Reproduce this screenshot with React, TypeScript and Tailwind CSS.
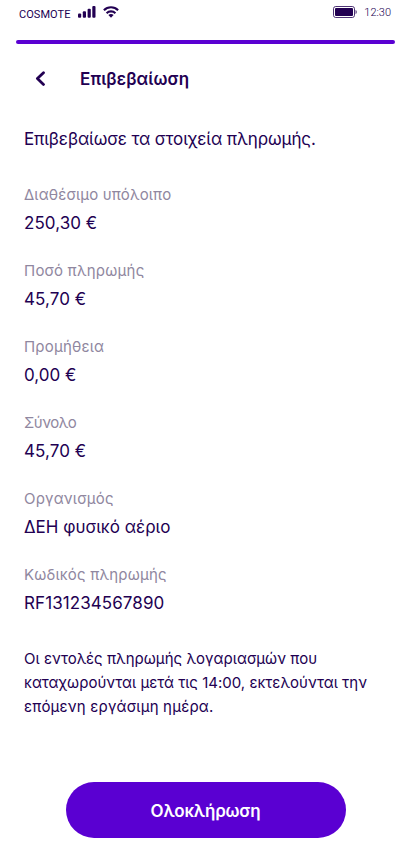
type Field = { label: string; value: string; labelTracking: string; valueTracking: string };

const fields: Field[] = [
  { label: "Διαθέσιμο υπόλοιπο", value: "250,30 €", labelTracking: "tracking-[0.15px]", valueTracking: "tracking-[0.05px]" },
  { label: "Ποσό πληρωμής", value: "45,70 €", labelTracking: "tracking-[0.23px]", valueTracking: "tracking-[0.08px]" },
  { label: "Προμήθεια", value: "0,00 €", labelTracking: "tracking-[0.2px]", valueTracking: "tracking-[0px]" },
  { label: "Σύνολο", value: "45,70 €", labelTracking: "tracking-[-0.5px]", valueTracking: "tracking-[0.08px]" },
  { label: "Οργανισμός", value: "ΔΕΗ φυσικό αέριο", labelTracking: "tracking-[0.2px]", valueTracking: "tracking-[0px]" },
  { label: "Κωδικός πληρωμής", value: "RF131234567890", labelTracking: "tracking-[0.19px]", valueTracking: "tracking-[0.08px]" },
];

function SignalIcon() {
  return (
    <svg width="18" height="12" viewBox="0 0 18 12" fill="currentColor" aria-hidden="true">
      <rect x="0" y="7.5" width="3.2" height="4.2" rx="1" />
      <rect x="4.8" y="5.2" width="3.2" height="6.5" rx="1" />
      <rect x="9.6" y="2.8" width="3.2" height="8.9" rx="1" />
      <rect x="14.3" y="0" width="3.2" height="11.7" rx="1" />
    </svg>
  );
}

function WifiIcon() {
  return (
    <svg width="16" height="12" viewBox="0 0 16 12" fill="none" stroke="currentColor" strokeWidth="2.1" aria-hidden="true">
      <path d="M0.9 4.3C4.8 0.3 11.2 0.3 15.1 4.3" />
      <path d="M3.6 7.2C6 4.8 10 4.8 12.4 7.2" />
      <path d="M5.4 9.1C6.9 7.7 9.1 7.7 10.6 9.1L8 11.8Z" fill="currentColor" stroke="none" />
    </svg>
  );
}

function BatteryIcon() {
  return (
    <svg width="25" height="12" viewBox="0 0 25 12" aria-hidden="true">
      <rect x="0.5" y="0.5" width="21" height="11" rx="2.2" fill="none" stroke="currentColor" opacity="0.8" />
      <rect x="2" y="2" width="18" height="8" rx="1" fill="currentColor" />
      <path d="M22.4 4V8C23.5 7.6 24 6.9 24 6S23.5 4.4 22.4 4Z" fill="currentColor" opacity="0.6" />
    </svg>
  );
}

export default function App() {
  return (
    <main className="flex h-[862px] w-[411px] flex-col overflow-hidden bg-white font-['Inter','Noto_Sans',sans-serif] text-[#220052]">
      <header className="flex h-10 items-start justify-between pr-[20px] pl-[19px]">
        <div className="flex items-start">
          <span className="w-[59px] pt-[7px] font-['Roboto',sans-serif] text-[11px] leading-4 tracking-[0.05px]">COSMOTE</span>
          <div className="flex gap-[7px] pt-[6px]">
            <SignalIcon />
            <WifiIcon />
          </div>
        </div>
        <div className="flex items-start gap-[6px] pt-[6px]">
          <BatteryIcon />
          <span className="-mt-[1px] font-['Roboto',sans-serif] text-[11px] leading-4 font-light">12:30</span>
        </div>
      </header>
      <div className="mx-4 h-1 shrink-0 rounded-full bg-[#5a00d2]" />

      <nav className="flex h-[69px] shrink-0 items-center pl-[35px]">
        <button className="flex w-[45px]" aria-label="Πίσω">
          <svg width="11" height="16" viewBox="0 0 11 16" fill="none" stroke="currentColor" strokeWidth="2.8" strokeLinecap="round" strokeLinejoin="round" aria-hidden="true">
            <path d="M8.5 1.8L2.4 7.6L8.5 13.4" />
          </svg>
        </button>
        <h1 className="pt-px text-[17px] leading-6 font-semibold tracking-[0.1px]">Επιβεβαίωση</h1>
      </nav>

      <section className="flex flex-col px-6 pt-[14px]">
        <p className="text-[17px] leading-6 tracking-[-0.11px]">Επιβεβαίωσε τα στοιχεία πληρωμής.</p>
        <dl className="mt-8 flex flex-col gap-6">
          {fields.map((field) => (
            <div key={field.label} className="flex h-[52px] flex-col gap-1">
              <dt className={`text-[15px] leading-6 text-[#9087a0] ${field.labelTracking}`}>{field.label}</dt>
              <dd className={`text-[17px] leading-6 ${field.valueTracking}`}>{field.value}</dd>
            </div>
          ))}
        </dl>
        <p className="mt-8 text-[15px] leading-6 whitespace-nowrap">
          <span className="block tracking-[0.03px]">Οι εντολές πληρωμής λογαριασμών που</span>
          <span className="block tracking-[0.01px]">καταχωρούνται μετά τις 14:00, εκτελούνται την</span>
          <span className="block tracking-[0.2px]">επόμενη εργάσιμη ημέρα.</span>
        </p>
      </section>

      <button className="mt-auto mb-6 ml-[65.5px] h-14 w-[280px] shrink-0 rounded-full bg-[#5a00d2] pt-[3px] text-[17px] font-semibold tracking-[-0.22px] text-white">
        Ολοκλήρωση
      </button>
    </main>
  );
}
